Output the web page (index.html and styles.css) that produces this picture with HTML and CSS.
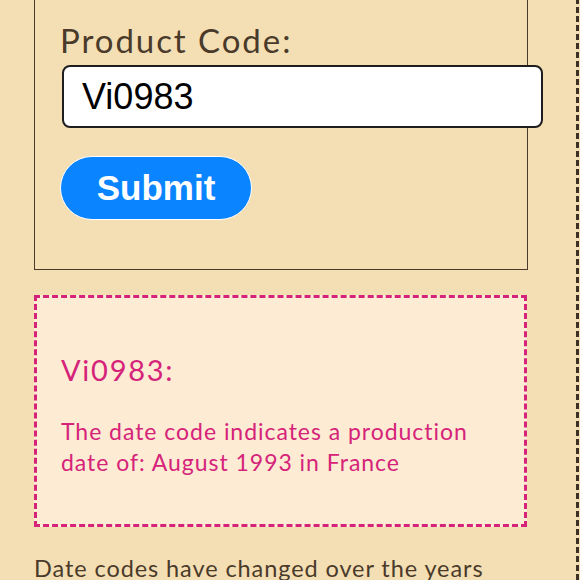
FILE: index.html
```html
<!DOCTYPE html>
<html lang="en">
<head>
<meta charset="utf-8">
<title>Date Code Lookup</title>
<link rel="stylesheet" href="styles.css">
</head>
<body>
<div class="page">
  <form class="lookup">
    <label class="label" for="code">Product Code:</label>
    <input class="code-input" id="code" type="text" value="Vi0983">
    <button class="submit" type="button">Submit</button>
  </form>
  <section class="result">
    <h2 class="result-title">Vi0983:</h2>
    <p class="result-text">The date code indicates a production date of: August 1993 in France</p>
  </section>
  <p class="note">Date codes have changed over the years</p>
</div>
</body>
</html>
```
FILE: styles.css
```css
html, body {
  margin: 0;
  padding: 0;
  background: #f4dfb5;
  height: 580px;
  overflow: hidden;
}
.page {
  width: 542px;
  padding-left: 34px;
  border-right: 3px dashed #3d3025;
  min-height: 600px;
  font-family: "Lato", "Open Sans", sans-serif;
  color: #4a3a2a;
}
.lookup {
  margin-top: -11px;
  width: 467px;
  border: 1px solid #4a3a2a;
  padding: 30px 0 49px 25px;
  display: flex;
  flex-direction: column;
  align-items: flex-start;
}
.label {
  font-size: 33px;
  line-height: 40px;
  letter-spacing: 0.059em;
  color: #4a3a2a;
}
.code-input {
  margin: 5px 0 0 2px;
  width: 481px;
  height: 63px;
  box-sizing: border-box;
  border: 2px solid #1e1e1e;
  border-radius: 8px;
  background: #fff;
  padding: 0 18px;
  font-family: "Liberation Sans", Arial, sans-serif;
  font-size: 36px;
  color: #000;
  outline: none;
}
.submit {
  margin-top: 28px;
  width: 192px;
  height: 64px;
  border: 1px solid #fff;
  border-radius: 32px;
  background: #0a84ff;
  color: #fff;
  font-family: "Liberation Sans", Arial, sans-serif;
  font-weight: bold;
  font-size: 35px;
  padding: 0;
}
.result {
  margin-top: 25px;
  width: 493px;
  height: 232px;
  box-sizing: border-box;
  border: 3px dashed #d6237a;
  background: #fdebd3;
  padding: 55px 24px 0 24px;
  color: #d6237a;
}
.result-title {
  margin: 0;
  font-size: 29px;
  font-weight: normal;
  line-height: 34px;
  letter-spacing: 0.06em;
}
.result-text {
  margin: 29px 0 0 0;
  font-size: 23px;
  line-height: 31px;
  letter-spacing: 0.042em;
}
.note {
  margin: 26px 0 0 0;
  font-size: 23.5px;
  line-height: 31px;
  letter-spacing: 0.039em;
  color: #4a3a2a;
}
```
